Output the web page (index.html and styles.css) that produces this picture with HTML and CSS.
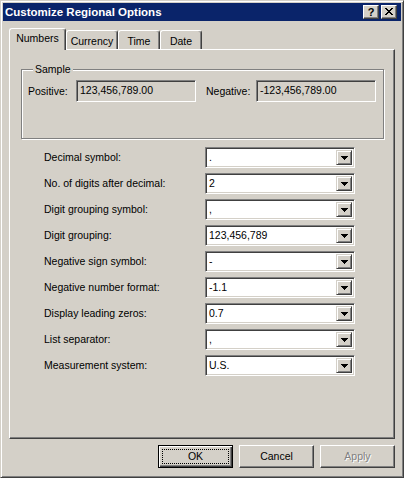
FILE: index.html
```html
<!DOCTYPE html>
<html>
<head>
<meta charset="utf-8">
<title>Customize Regional Options</title>
<link rel="stylesheet" href="styles.css">
</head>
<body>
<div class="window">
  <div class="titlebar">
    <span class="title">Customize Regional Options</span>
    <div class="caption-buttons">
      <div class="cbtn help">?</div>
      <div class="cbtn close">
        <svg width="8" height="7" viewBox="0 0 8 7" shape-rendering="crispEdges"><path d="M0 0h2v1H0zM6 0h2v1H6zM1 1h2v1H1zM5 1h2v1H5zM2 2h4v1H2zM3 3h2v1H3zM2 4h4v1H2zM1 5h2v1H1zM5 5h2v1H5zM0 6h2v1H0zM6 6h2v1H6z" fill="#000"/></svg>
      </div>
    </div>
  </div>
  <div class="content">
    <div class="tabs">
      <div class="tab active tab-numbers">Numbers</div>
      <div class="tab tab-currency">Currency</div>
      <div class="tab tab-time">Time</div>
      <div class="tab tab-date">Date</div>
    </div>
    <div class="panel">
      <div class="group">
        <span class="legend">Sample</span>
        <div class="sample-row">
          <span class="slabel pos">Positive:</span>
          <div class="edit">123,456,789.00</div>
          <span class="slabel neg">Negative:</span>
          <div class="edit">-123,456,789.00</div>
        </div>
      </div>
      <div class="form">
        <span class="flabel">Decimal symbol:</span>
        <div class="combo"><span class="cval">.</span><span class="cbtn-drop"><svg width="7" height="4" viewBox="0 0 7 4" shape-rendering="crispEdges"><path d="M0 0h7v1H0zM1 1h5v1H1zM2 2h3v1H2zM3 3h1v1H3z" fill="#000"/></svg></span></div>
        <span class="flabel">No. of digits after decimal:</span>
        <div class="combo"><span class="cval">2</span><span class="cbtn-drop"><svg width="7" height="4" viewBox="0 0 7 4" shape-rendering="crispEdges"><path d="M0 0h7v1H0zM1 1h5v1H1zM2 2h3v1H2zM3 3h1v1H3z" fill="#000"/></svg></span></div>
        <span class="flabel">Digit grouping symbol:</span>
        <div class="combo"><span class="cval">,</span><span class="cbtn-drop"><svg width="7" height="4" viewBox="0 0 7 4" shape-rendering="crispEdges"><path d="M0 0h7v1H0zM1 1h5v1H1zM2 2h3v1H2zM3 3h1v1H3z" fill="#000"/></svg></span></div>
        <span class="flabel">Digit grouping:</span>
        <div class="combo"><span class="cval">123,456,789</span><span class="cbtn-drop"><svg width="7" height="4" viewBox="0 0 7 4" shape-rendering="crispEdges"><path d="M0 0h7v1H0zM1 1h5v1H1zM2 2h3v1H2zM3 3h1v1H3z" fill="#000"/></svg></span></div>
        <span class="flabel">Negative sign symbol:</span>
        <div class="combo"><span class="cval">-</span><span class="cbtn-drop"><svg width="7" height="4" viewBox="0 0 7 4" shape-rendering="crispEdges"><path d="M0 0h7v1H0zM1 1h5v1H1zM2 2h3v1H2zM3 3h1v1H3z" fill="#000"/></svg></span></div>
        <span class="flabel">Negative number format:</span>
        <div class="combo"><span class="cval">-1.1</span><span class="cbtn-drop"><svg width="7" height="4" viewBox="0 0 7 4" shape-rendering="crispEdges"><path d="M0 0h7v1H0zM1 1h5v1H1zM2 2h3v1H2zM3 3h1v1H3z" fill="#000"/></svg></span></div>
        <span class="flabel">Display leading zeros:</span>
        <div class="combo"><span class="cval">0.7</span><span class="cbtn-drop"><svg width="7" height="4" viewBox="0 0 7 4" shape-rendering="crispEdges"><path d="M0 0h7v1H0zM1 1h5v1H1zM2 2h3v1H2zM3 3h1v1H3z" fill="#000"/></svg></span></div>
        <span class="flabel">List separator:</span>
        <div class="combo"><span class="cval">,</span><span class="cbtn-drop"><svg width="7" height="4" viewBox="0 0 7 4" shape-rendering="crispEdges"><path d="M0 0h7v1H0zM1 1h5v1H1zM2 2h3v1H2zM3 3h1v1H3z" fill="#000"/></svg></span></div>
        <span class="flabel">Measurement system:</span>
        <div class="combo"><span class="cval">U.S.</span><span class="cbtn-drop"><svg width="7" height="4" viewBox="0 0 7 4" shape-rendering="crispEdges"><path d="M0 0h7v1H0zM1 1h5v1H1zM2 2h3v1H2zM3 3h1v1H3z" fill="#000"/></svg></span></div>
      </div>
    </div>
    <div class="buttons">
      <div class="btn default"><span class="focus">OK</span></div>
      <div class="btn">Cancel</div>
      <div class="btn disabled">Apply</div>
    </div>
  </div>
</div>
</body>
</html>
```
FILE: styles.css
```css
html, body {
  margin: 0;
  padding: 0;
  width: 404px;
  height: 478px;
  overflow: hidden;
  background: #d4d0c8;
}

.window {
  width: 404px;
  height: 478px;
  box-sizing: border-box;
  border: 1px solid;
  border-color: #d4d0c8 #404040 #404040 #d4d0c8;
  box-shadow: inset 1px 1px #ffffff, inset -1px -1px #808080;
  padding: 2px;
  display: flex;
  flex-direction: column;
  background: #d4d0c8;
  font-family: "Liberation Sans", Arial, sans-serif;
  font-size: 10.5px;
  color: #000;
}

.titlebar {
  height: 18px;
  flex: none;
  background: #0a246a;
  display: flex;
  align-items: center;
  justify-content: space-between;
  padding: 0 4px 0 2px;
}

.title {
  color: #ffffff;
  font-weight: bold;
  font-size: 11.5px;
  line-height: 14px;
}

.caption-buttons {
  display: flex;
  gap: 2px;
}

.cbtn {
  width: 16px;
  height: 14px;
  box-sizing: border-box;
  background: #d4d0c8;
  border: 1px solid;
  border-color: #ffffff #404040 #404040 #ffffff;
  box-shadow: inset -1px -1px #808080;
  display: flex;
  align-items: center;
  justify-content: center;
}

.help {
  font-weight: bold;
  font-size: 11px;
  line-height: 12px;
  padding-bottom: 1px;
}

.close svg {
  display: block;
  margin-top: -1px;
}

.content {
  flex: 1;
  display: flex;
  flex-direction: column;
  padding: 7px 6px 7px 6px;
}

.tabs {
  height: 21px;
  display: flex;
  align-items: flex-end;
  position: relative;
  z-index: 1;
}

.tab {
  height: 19px;
  box-sizing: border-box;
  border-left: 1px solid #ffffff;
  border-top: 1px solid #ffffff;
  border-right: 1px solid #404040;
  box-shadow: inset -1px 0 #808080;
  border-radius: 3px 3px 0 0;
  background: #d4d0c8;
  text-align: center;
  line-height: 13px;
  padding-top: 4px;
}

.tab.active {
  height: 22px;
  margin-bottom: -1px;
  padding-top: 3px;
}

.tab-numbers { width: 57px; }
.tab-currency { width: 52px; }
.tab-time { width: 42px; }
.tab-date { width: 42px; }

.panel {
  width: 386px;
  height: 390px;
  flex: none;
  box-sizing: border-box;
  border-left: 1px solid #ffffff;
  border-top: 1px solid #ffffff;
  border-right: 1px solid #404040;
  border-bottom: 1px solid #404040;
  box-shadow: inset -1px -1px #808080;
  padding: 19px 10px 0 11px;
  display: flex;
  flex-direction: column;
}

.group {
  width: 363px;
  height: 70px;
  box-sizing: border-box;
  border: 1px solid #808080;
  box-shadow: inset 1px 1px #ffffff, 1px 1px #ffffff;
  padding: 0 6px;
  display: flex;
  flex-direction: column;
}

.legend {
  align-self: flex-start;
  margin: -7px 0 0 5px;
  padding: 0 2px;
  background: #d4d0c8;
  line-height: 13px;
}

.sample-row {
  display: flex;
  align-items: center;
  margin-top: 4px;
}

.slabel {
  line-height: 13px;
}

.pos { width: 48px; }
.neg { width: 50px; margin-left: 10px; }

.edit {
  width: 120px;
  height: 22px;
  box-sizing: border-box;
  border: 1px solid;
  border-color: #808080 #ffffff #ffffff #808080;
  box-shadow: inset 1px 1px #404040, inset -1px -1px #d4d0c8;
  padding: 0 0 2px 3px;
  display: flex;
  align-items: center;
  white-space: nowrap;
}

.form {
  margin: 8px 0 0 23px;
  display: grid;
  grid-template-columns: 161px 150px;
  grid-auto-rows: 21px;
  row-gap: 5px;
  align-items: center;
}

.flabel {
  line-height: 13px;
  white-space: nowrap;
}

.combo {
  height: 21px;
  box-sizing: border-box;
  background: #ffffff;
  border: 1px solid;
  border-color: #808080 #ffffff #ffffff #808080;
  box-shadow: inset 1px 1px #404040, inset -1px -1px #d4d0c8;
  padding: 2px 2px 2px 3px;
  display: flex;
  align-items: stretch;
}

.cval {
  flex: 1;
  display: flex;
  align-items: center;
  line-height: 13px;
}

.cbtn-drop {
  width: 16px;
  box-sizing: border-box;
  background: #d4d0c8;
  border-top: 1px solid #d4d0c8;
  border-left: 1px solid #d4d0c8;
  border-right: 1px solid #404040;
  border-bottom: 1px solid #404040;
  box-shadow: inset 1px 1px #ffffff, inset -1px -1px #808080;
  display: flex;
  align-items: center;
  justify-content: center;
}

.cbtn-drop svg {
  display: block;
}

.buttons {
  margin-top: 6px;
  display: flex;
  justify-content: flex-end;
  gap: 6px;
}

.btn {
  width: 75px;
  height: 23px;
  box-sizing: border-box;
  border: 1px solid;
  border-color: #ffffff #404040 #404040 #ffffff;
  box-shadow: inset -1px -1px #808080;
  display: flex;
  align-items: center;
  justify-content: center;
  line-height: 13px;
  padding-bottom: 1px;
}

.btn.default {
  border-color: #000000;
  box-shadow: inset 1px 1px #ffffff, inset -1px -1px #404040, inset -2px -2px #808080;
  padding: 3px;
}

.focus {
  flex: 1;
  align-self: stretch;
  box-sizing: border-box;
  border: 1px dotted #000000;
  display: flex;
  align-items: center;
  justify-content: center;
}

.btn.disabled {
  color: #808080;
  text-shadow: 1px 1px #ffffff;
}
```
